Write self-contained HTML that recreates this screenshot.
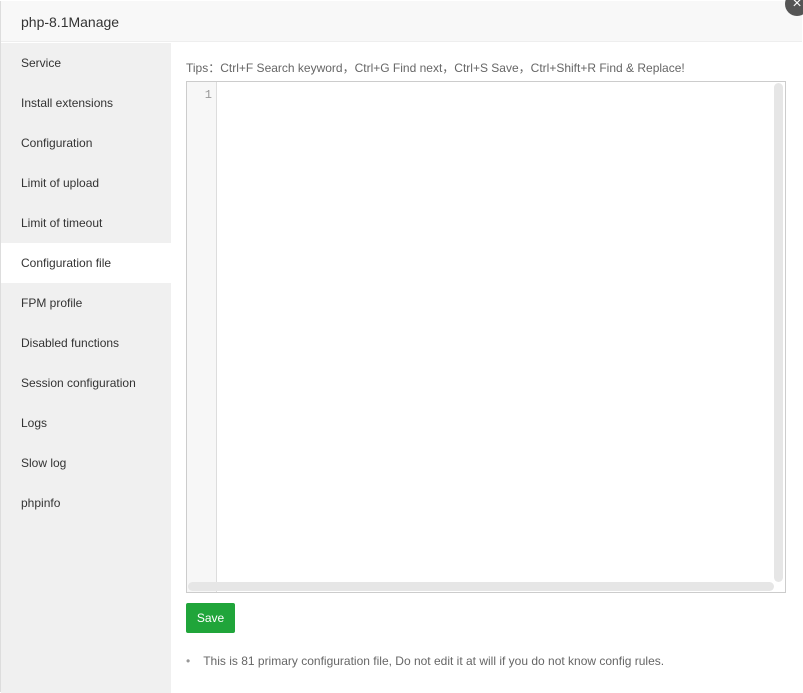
<!DOCTYPE html>
<html><head><style>
body{margin:0;width:803px;height:692px;background:#fff;font-family:"Liberation Sans",sans-serif;position:relative;overflow:hidden}
.modal{position:absolute;left:0;top:1px;width:801px;height:691px;background:#fff;border-left:1px solid #ddd}
.hd{height:40px;background:#f8f8f8;border-bottom:1px solid #eee;font-size:14px;color:#333;line-height:42px;padding-left:20px}
.side{position:absolute;left:0;top:42px;width:170px;height:650px;background:#f0f0f0}
.side div{height:40px;line-height:40px;padding-left:20px;font-size:12px;color:#333}
.side .on{background:#fff}
.close{position:absolute;left:785px;top:-8px;width:24px;height:24px;border-radius:50%;background:#555;color:#fff;font-size:16px;line-height:24px;text-align:center}
.tips{position:absolute;left:186px;top:59px;font-size:12px;color:#666}
.ed{position:absolute;left:186px;top:81px;width:598px;height:510px;border:1px solid #ccc;background:#fff}
.gut{position:absolute;left:0;top:0;width:30px;height:100%;background:#f7f7f7;border-right:1px solid #ddd;font-size:12px;color:#999;text-align:right;box-sizing:border-box;padding:6px 4px 0 0;font-family:"Liberation Mono",monospace}
.vs{position:absolute;right:2px;top:1px;width:9px;height:499px;background:#e6e6e6;border-radius:5px}
.hs{position:absolute;left:1px;bottom:1px;width:586px;height:9px;background:#e6e6e6;border-radius:5px}
.btn{position:absolute;left:186px;top:603px;width:49px;height:30px;background:#20a53a;border-radius:2px;color:#fff;font-size:12px;line-height:30px;text-align:center}
.note{position:absolute;left:186px;top:654px;font-size:12px;color:#666}
</style></head><body>
<div class="modal">
<div class="hd">php-8.1Manage</div>
<div class="side">
<div>Service</div><div>Install extensions</div><div>Configuration</div><div>Limit of upload</div><div>Limit of timeout</div><div class="on">Configuration file</div><div>FPM profile</div><div>Disabled functions</div><div>Session configuration</div><div>Logs</div><div>Slow log</div><div>phpinfo</div>
</div>
</div>
<div class="close">×</div>
<div class="tips">Tips：Ctrl+F Search keyword，Ctrl+G Find next，Ctrl+S Save，Ctrl+Shift+R Find &amp; Replace!</div>
<div class="ed"><div class="gut">1</div><div class="vs"></div><div class="hs"></div></div>
<div class="btn">Save</div>
<div class="note"><span style="color:#999;margin-right:13px">•</span>This is 81 primary configuration file, Do not edit it at will if you do not know config rules.</div>
</body></html>
